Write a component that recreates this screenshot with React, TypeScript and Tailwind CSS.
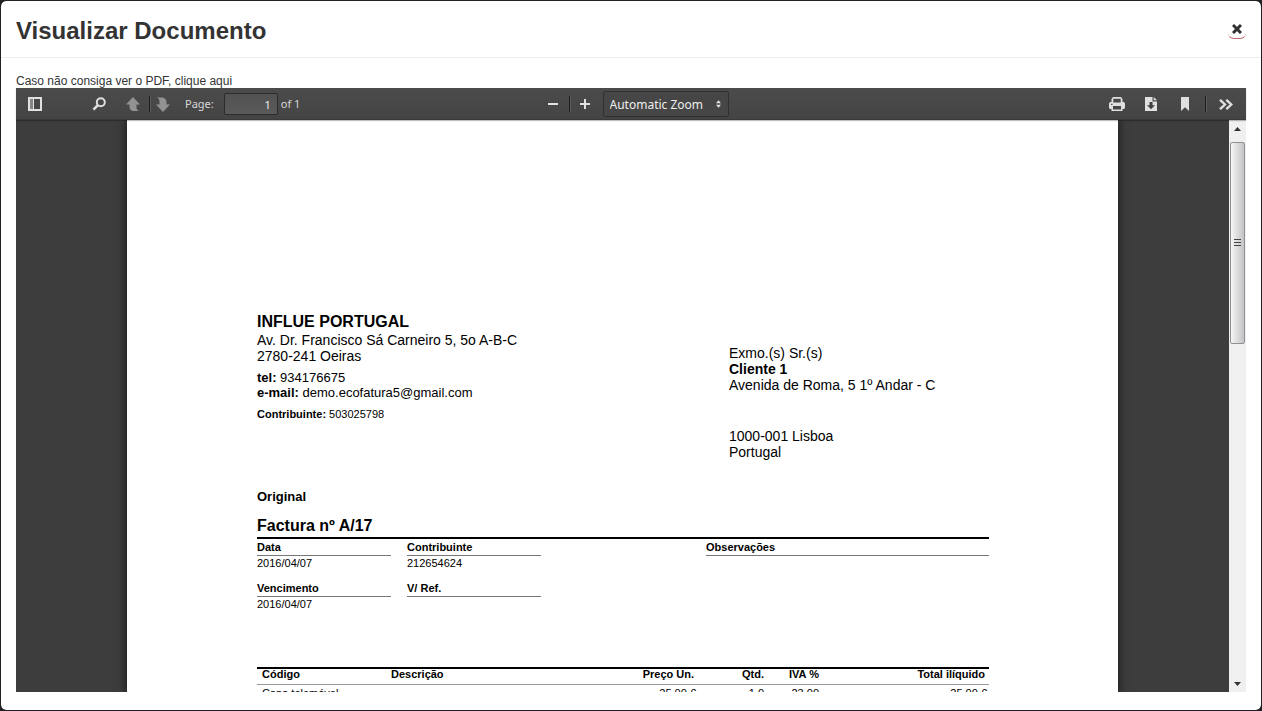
import type { ReactNode } from "react";

const lines = [
  { code: "Capa telemóvel", description: "", price: "25.00 €", quantity: "1.0", vat: "23.00", total: "25.00 €" },
];

function IconButton({ label, className, children }: { label: string; className?: string; children: ReactNode }) {
  return (
    <button
      type="button"
      aria-label={label}
      className={`flex h-6 w-6 shrink-0 items-center justify-center text-[#e0e0e0] ${className ?? ""}`}
    >
      {children}
    </button>
  );
}

function Separator() {
  return <span className="mx-1 h-4 w-0.5 shrink-0 border-l border-[#1f1f1f] bg-[#5a5a5a]" />;
}

function Toolbar() {
  return (
    <div className="relative z-10 flex h-8 shrink-0 items-center bg-linear-to-b from-[#4b4b4b] to-[#444444] font-['Noto_Sans',sans-serif] text-[11px] text-[#d9d9d9] shadow-[inset_0_-1px_0_#3a3a3a,0_1px_1px_rgba(0,0,0,0.25)]">
      <div className="flex flex-1 items-center pl-[7px]">
        <IconButton label="Toggle Sidebar">
          <svg width="14" height="14" viewBox="0 0 14 14" fill="none">
            <rect x="1" y="1" width="12" height="12" stroke="currentColor" strokeWidth="2" />
            <path d="M5.5 2v10" stroke="currentColor" />
            <path d="M2 2h3v10H2z" fill="#858585" />
          </svg>
        </IconButton>
        <IconButton label="Find in Document" className="ml-10">
          <svg width="14" height="14" viewBox="0 0 14 14" fill="none" stroke="currentColor">
            <circle cx="8.8" cy="5.2" r="4" strokeWidth="2" />
            <path d="M5.7 8.3L1.4 12.6" strokeWidth="2.6" />
          </svg>
        </IconButton>
        <IconButton label="Previous Page" className="ml-2.5">
          <svg width="14" height="15" viewBox="0 0 14 15" fill="#929292">
            <path d="M7 0L14 7.5H10.5V11Q10.7 13 13 14H7Q3.5 13 3.5 10V7.5H0z" />
          </svg>
        </IconButton>
        <Separator />
        <IconButton label="Next Page" className="-ml-1">
          <svg width="14" height="15" viewBox="0 0 14 15" fill="#929292">
            <path d="M7 15L0 7.5H3.5V4Q3.3 1.5 1 0.5H6.5Q10.5 1.5 10.5 5V7.5H14z" />
          </svg>
        </IconButton>
        <label htmlFor="page-number" className="ml-2.5">Page:</label>
        <input
          id="page-number"
          type="text"
          defaultValue="1"
          className="ml-2.5 h-[22px] w-[54px] rounded-xs border border-[#2b2b2b] bg-linear-to-b from-[#525252] to-[#5a5a5a] px-1.5 text-right text-[11px] text-[#f0f0f0] outline-none"
        />
        <span className="ml-[3px]">of 1</span>
      </div>
      <div className="flex items-center pl-2">
        <IconButton label="Zoom Out">
          <svg width="12" height="12" viewBox="0 0 12 12" fill="currentColor">
            <path d="M1 5h10v2H1z" />
          </svg>
        </IconButton>
        <Separator />
        <IconButton label="Zoom In" className="-ml-0.5">
          <svg width="12" height="12" viewBox="0 0 12 12" fill="currentColor">
            <path d="M1 5h4V1h2v4h4v2H7v4H5V7H1z" />
          </svg>
        </IconButton>
        <div className="relative ml-1.5 flex items-center">
          <select
            aria-label="Zoom"
            className="h-[26px] w-[126px] appearance-none rounded-xs border border-[#303030] bg-[#464646] pt-0.5 pl-1.5 text-xs text-[#eeeeee] outline-none"
          >
            <option>Automatic Zoom</option>
            <option>Actual Size</option>
            <option>Page Width</option>
          </select>
          <svg className="pointer-events-none absolute right-2" width="5" height="8" viewBox="0 0 6 9" fill="#e4e4e4">
            <path d="M3 0L6 3.5H0zM3 9L0 5.5H6z" />
          </svg>
        </div>
      </div>
      <div className="flex flex-1 items-center justify-end gap-2.5 pr-2">
        <IconButton label="Print">
          <svg width="16" height="14" viewBox="0 0 16 14" fill="currentColor">
            <path fillRule="evenodd" d="M4 0h8l1.5 2v3H15l1 1.5V11l-1 1h-1.5v2h-11v-2H1l-1-1V6.5L1 5h1.5V2zM4.3 1.8V5.6h7.4V1.8zM4 9v3.4h8V9z" />
            <path d="M2 6.7h1.5v1.2H2z" fill="#555" />
          </svg>
        </IconButton>
        <IconButton label="Download">
          <svg width="12" height="14" viewBox="0 0 12 14">
            <path d="M0 0h7.5v4.5H12V14H0z" fill="currentColor" />
            <path d="M8.7 0L12 3.3H8.7z" fill="currentColor" />
            <path d="M4.5 5h3v3.3H10L6 12.3 2 8.3h2.5z" fill="#414141" />
          </svg>
        </IconButton>
        <IconButton label="Current View">
          <svg width="8" height="14" viewBox="0 0 8 14" fill="currentColor">
            <path d="M0 0h8v14L4 10.2 0 14z" />
          </svg>
        </IconButton>
        <div className="-ml-1.5 flex items-center gap-1">
          <Separator />
          <IconButton label="Tools" className="-ml-px">
            <svg width="14" height="11" viewBox="0 0 14 11" fill="none" stroke="currentColor" strokeWidth="2.4">
              <path d="M1 .8l5 4.7-5 4.7M7.3 .8l5 4.7-5 4.7" />
            </svg>
          </IconButton>
        </div>
      </div>
    </div>
  );
}

function Field({ label, value }: { label: string; value?: string }) {
  return (
    <div className="min-h-[41px]">
      <dt className="h-[17px] border-b border-[#777777] font-bold">{label}</dt>
      <dd className="leading-[15px]">{value}</dd>
    </div>
  );
}

function Invoice() {
  return (
    <article className="w-full max-w-[991px] bg-white pt-48 pr-[129px] pl-[130px] text-[11px] leading-4 text-black shadow-[0_0_9px_1px_rgba(0,0,0,0.6)]">
      <div className="flex">
        <address className="w-[472px] shrink-0 not-italic">
          <h2 className="text-base leading-5 font-bold">INFLUE PORTUGAL</h2>
          <p className="text-sm leading-4">
            Av. Dr. Francisco Sá Carneiro 5, 5o A-B-C
            <br />
            2780-241 Oeiras
          </p>
          <p className="mt-1.5 text-[13px] leading-[15px]">
            <b>tel:</b> 934176675
            <br />
            <b>e-mail:</b> demo.ecofatura5@gmail.com
          </p>
          <p className="mt-1.5">
            <b>Contribuinte:</b> 503025798
          </p>
        </address>
        <address className="pt-[33px] text-sm leading-4 not-italic">
          <p>Exmo.(s) Sr.(s)</p>
          <p className="font-bold">Cliente 1</p>
          <p>Avenida de Roma, 5 1º Andar - C</p>
          <p className="mt-[35px]">1000-001 Lisboa</p>
          <p>Portugal</p>
        </address>
      </div>
      <p className="mt-[29px] text-[13px] leading-4 font-bold">Original</p>
      <h3 className="mt-[11px] border-b-2 border-black pb-px text-base leading-5 font-bold">Factura nº A/17</h3>
      <dl className="grid grid-cols-[134px_134px_1fr] gap-x-4">
        <Field label="Data" value="2016/04/07" />
        <Field label="Contribuinte" value="212654624" />
        <div className="ml-[149px]">
          <Field label="Observações" />
        </div>
        <Field label="Vencimento" value="2016/04/07" />
        <Field label="V/ Ref." />
      </dl>
      <table className="mt-[46px] w-full table-fixed border-collapse">
        <colgroup>
          <col className="w-[129px]" />
          <col />
          <col className="w-[102px]" />
          <col className="w-[70px]" />
          <col className="w-[55px]" />
          <col className="w-[55px]" />
          <col className="w-[110px]" />
        </colgroup>
        <thead>
          <tr className="h-4 border-t-2 border-b border-t-black border-b-[#999999] text-right align-top leading-[11px]">
            <th scope="col" className="px-[5px] text-left">Código</th>
            <th scope="col" className="px-[5px] text-left">Descrição</th>
            <th scope="col" className="px-[5px]">Preço Un.</th>
            <th scope="col" className="px-[5px]">Qtd.</th>
            <th scope="col" className="px-[5px]">IVA %</th>
            <td />
            <th scope="col" className="px-1">Total ilíquido</th>
          </tr>
        </thead>
        <tbody>
          {lines.map((line) => (
            <tr key={line.code} className="text-right leading-4">
              <td className="px-[5px] text-left">{line.code}</td>
              <td className="px-[5px] text-left">{line.description}</td>
              <td className="px-[3px]">{line.price}</td>
              <td className="px-[5px]">{line.quantity}</td>
              <td className="px-[5px]">{line.vat}</td>
              <td />
              <td className="px-0.5">{line.total}</td>
            </tr>
          ))}
        </tbody>
      </table>
    </article>
  );
}

function ScrollBar() {
  return (
    <div className="flex w-[17px] shrink-0 flex-col items-center bg-[#f0f0f0]" aria-hidden="true">
      <svg className="my-[7px] shrink-0" width="7" height="8" viewBox="0 0 7 8" fill="#333">
        <path d="M3.5 0L7 4H0z" />
      </svg>
      <div className="flex h-[202px] w-[15px] shrink-0 items-center justify-center rounded-xs border border-[#909090] bg-linear-to-r from-[#f6f6f6] via-[#dcdcde] to-[#c3c3c7]">
        <svg width="8" height="8" viewBox="0 0 8 8" stroke="#444">
          <path d="M0 .5h7M0 3.5h7M0 6.5h7" />
        </svg>
      </div>
      <svg className="mt-auto mb-1.5 shrink-0" width="7" height="4" viewBox="0 0 7 4" fill="#333">
        <path d="M3.5 4L0 0H7z" />
      </svg>
    </div>
  );
}

export default function App() {
  return (
    <div className="h-screen bg-[#202124] font-['Liberation_Sans',Arial,sans-serif]">
      <section
        role="dialog"
        aria-labelledby="dialog-title"
        className="flex h-full flex-col rounded-md border border-[#202124] bg-white bg-clip-padding text-[#333333]"
      >
        <header className="flex h-[57px] shrink-0 items-center justify-between border-b border-[#eeeeee] px-[15px]">
          <h1 id="dialog-title" className="pt-1 text-2xl font-bold">Visualizar Documento</h1>
          <button
            type="button"
            aria-label="Fechar"
            className="flex h-5 w-[18px] items-center justify-center rounded-md border-b border-[#c0666b]"
          >
            <svg width="10" height="10" viewBox="0 0 10 10" stroke="#333" strokeWidth="3">
              <path d="M1 1l8 8M9 1L1 9" />
            </svg>
          </button>
        </header>
        <div className="flex min-h-0 flex-1 flex-col px-[15px] pt-3.5 pb-[18px]">
          <p className="h-4 shrink-0 text-xs leading-[18px]">
            Caso não consiga ver o PDF, <a href="#documento">clique aqui</a>
          </p>
          <div id="documento" className="flex min-h-0 flex-1 flex-col">
            <Toolbar />
            <div className="flex min-h-0 flex-1">
              <div className="flex min-w-0 flex-1 justify-center overflow-hidden bg-[#3d3d3d]">
                <Invoice />
              </div>
              <ScrollBar />
            </div>
          </div>
        </div>
      </section>
    </div>
  );
}
